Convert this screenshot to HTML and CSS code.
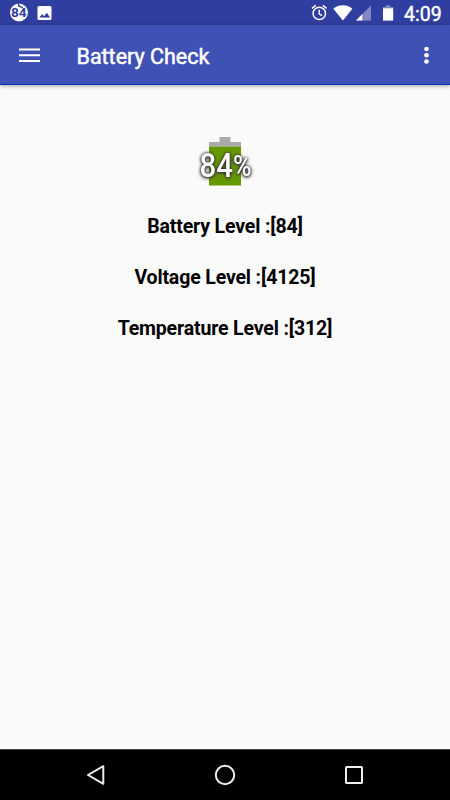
FILE: index.html
```html
<!DOCTYPE html>
<html lang="en">
<head>
  <meta charset="UTF-8" />
  <meta name="viewport" content="width=device-width, initial-scale=1.0"/>
  <title>Battery Check</title>
  <link rel="stylesheet" href="styles.css">
</head>
<body>

  <!-- Status bar -->
  <div class="status-bar">
    <svg class="notifications" width="60" height="25" viewBox="0 0 60 25">
      <circle cx="19" cy="12.5" r="9" fill="#fff"/>
      <path d="M18.7 3.2V6l4 1.7" fill="none" stroke="#303f9f" stroke-width="1.4"/>
      <text class="badge-text" x="11" y="17.3" textLength="15.6" lengthAdjust="spacingAndGlyphs">84</text>
      <rect x="37.5" y="6" width="14" height="14" rx="1.6" fill="#fff"/>
      <path d="M39.5 17.4l2.6-3.4 2 2.2 2.7-3.5 3.3 4.7z" fill="#303f9f"/>
    </svg>
    <svg class="indicators" width="100" height="25" viewBox="300 0 100 25">
      <g fill="none" stroke="#fff" stroke-width="1.5">
        <circle cx="319.3" cy="13.4" r="6.2"/>
        <path d="M319.2 9.8v4l2.8 1.8M312 8.4l3.7-3M326.6 8.4l-3.7-3"/>
      </g>
      <path d="M333.3 8.7C338.7 4.1 347 4.1 352.4 8.7L342.9 20.5z" fill="#fff"/>
      <path d="M356 20.4L371 5.4v15z" fill="#8089c4"/>
      <path d="M356 20.4l6.3-6.3v6.3z" fill="#fff"/>
      <path d="M385.8 5.2h4.6v1.7h2.8v1.8h-10.2V6.9h2.8z" fill="#8089c4"/>
      <rect x="383" y="8.3" width="10.2" height="12.3" fill="#fff"/>
    </svg>
    <span class="clock">4:09</span>
  </div>

  <!-- Toolbar -->
  <header class="toolbar">
    <svg class="menu-icon" width="21" height="16" viewBox="0 0 21 16">
      <path d="M0 1.5h21M0 7.2h21M0 13h21" stroke="#fff" stroke-width="2"/>
    </svg>
    <h1>Battery Check</h1>
    <svg class="more-icon" width="6" height="20" viewBox="0 0 6 20">
      <g fill="#fff">
        <circle cx="3.5" cy="3" r="2.3"/>
        <circle cx="3.5" cy="9.3" r="2.3"/>
        <circle cx="3.5" cy="15.5" r="2.3"/>
      </g>
    </svg>
  </header>

  <!-- Battery values -->
  <main class="content">
    <svg class="battery" width="50" height="50" viewBox="0 0 50 50">
      <path d="M19.5 0h11v5H41v4.5H9V5h10.5z" fill="#aaa"/>
      <rect x="9" y="9.5" width="32" height="39" fill="#690"/>
      <text class="battery-text" x="-0.5" y="40" textLength="52" lengthAdjust="spacingAndGlyphs">84<tspan font-size="29" dy="-1">%</tspan></text>
    </svg>
    <p>Battery Level :[84]</p>
    <p>Voltage Level :[4125]</p>
    <p>Temperature Level :[312]</p>
  </main>

  <!-- Navigation bar -->
  <footer class="nav-bar">
    <svg width="20" height="22" viewBox="0 0 20 22">
      <path d="M2 11L17.3 2.2v17.6z"/>
    </svg>
    <svg width="22" height="22" viewBox="0 0 22 22">
      <circle cx="11" cy="11" r="9.2"/>
    </svg>
    <svg width="20" height="22" viewBox="0 0 20 22">
      <rect x="2" y="3" width="16" height="16" rx="0.5"/>
    </svg>
  </footer>

</body>
</html>
```
FILE: styles.css
```css
body {
  margin: 0;
  height: 100vh;
  display: flex;
  flex-direction: column;
  background-color: #fafafa;
  font-family: Roboto, sans-serif;
  overflow: hidden;
}

.status-bar {
  display: flex;
  height: 25px;
  background-color: #303f9f;
  color: #fff;
}

.indicators {
  margin-left: auto;
}

.badge-text {
  font-size: 13px;
  font-weight: bold;
  fill: #303f9f;
}

.clock {
  width: 46px;
  padding-left: 4px;
  font-size: 19.5px;
  font-weight: 400;
  line-height: 29px;
  -webkit-text-stroke: 0.4px #fff;
}

.toolbar {
  display: flex;
  align-items: center;
  height: 60px;
  box-sizing: border-box;
  padding: 2px 21px 0 19px;
  background-color: #3f51b5;
  border-bottom: 1px solid #0d30aa;
  box-shadow: 0 1px 4px rgba(0, 0, 0, 0.35);
  color: #fff;
}

.toolbar h1 {
  margin: 0 0 0 36.5px;
  padding-top: 1px;
  font-size: 21.5px;
  font-weight: 400;
  -webkit-text-stroke: 0.5px #fff;
}

.more-icon {
  margin-left: auto;
}

.content {
  flex: 1;
  display: flex;
  flex-direction: column;
  align-items: center;
  padding-top: 52px;
}

.battery {
  margin-bottom: 27px;
  overflow: visible;
}

.battery-text {
  font-size: 34px;
  font-weight: 500;
  fill: #fff;
  filter: drop-shadow(0 0 1.5px #222) drop-shadow(0 1px 1.5px #444);
}

.content p {
  margin: 0 0 27px;
  font-size: 19.5px;
  font-weight: bold;
  letter-spacing: -0.15px;
  line-height: 25px;
  height: 24px;
  color: #000;
}

.nav-bar {
  display: flex;
  justify-content: space-between;
  align-items: center;
  height: 51px;
  box-sizing: border-box;
  padding: 0 86px 1px;
  background-color: #000;
  border-top: 1px solid #444;
}

.nav-bar svg {
  fill: none;
  stroke: #eee;
  stroke-width: 2;
  stroke-linejoin: round;
}
```
